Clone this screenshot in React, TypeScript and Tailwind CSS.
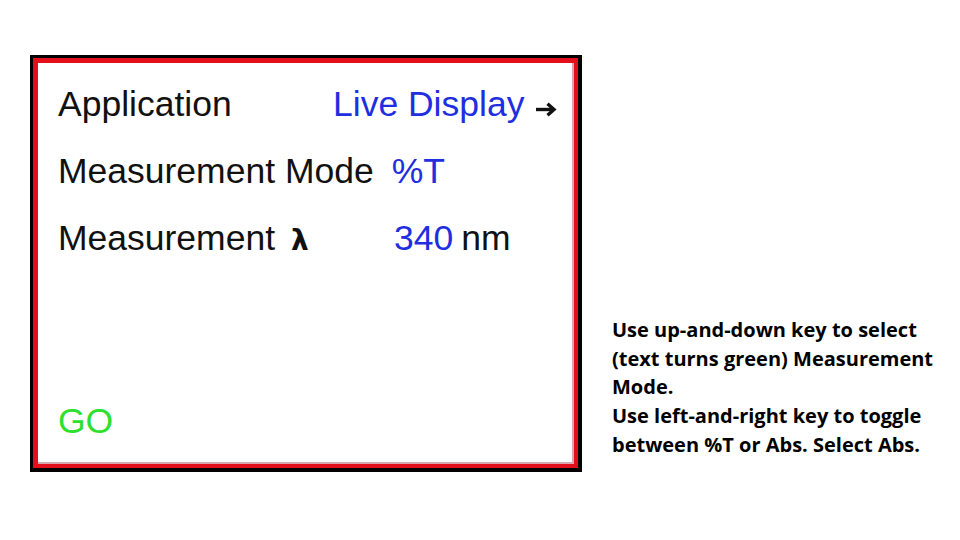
import React from "react";

export default function App() {
  return (
    <div className="w-[960px] h-[540px] bg-white flex items-start overflow-hidden">
      <div className="ml-[30px] mt-[55px] w-[552px] h-[417px] bg-black p-[3px] pr-[4px] pb-[4px] flex">
        <div className="flex-1 bg-[#e3101c] p-[5px] pr-[4px] pb-[4px] flex">
          <div
            className="flex-1 bg-white border-r-2 border-b-2 border-[#d4aab0] flex flex-col pl-[20px] pt-[8px] pb-[7px] text-[35.5px] leading-[67px] text-[#111]"
            style={{ fontFamily: '"Liberation Sans", Arial, sans-serif' }}
          >
            <div className="flex items-center">
              <span className="w-[275px] shrink-0">Application</span>
              <span className="text-[#1e2ee0]">Live Display</span>
              <svg className="ml-[11px] mt-[10px]" width="22" height="15" viewBox="0 0 22 15">
                <path d="M1 7.5 H18" stroke="#111" strokeWidth="3.4" fill="none" />
                <path d="M12.5 1.8 L19 7.5 L12.5 13.2" stroke="#111" strokeWidth="3.4" fill="none" strokeLinejoin="miter" />
              </svg>
            </div>
            <div className="flex items-center">
              <span>Measurement Mode</span>
              <span className="ml-[18px] text-[#1e2ee0]">%T</span>
            </div>
            <div className="flex items-baseline">
              <span className="w-[233px] shrink-0">Measurement</span>
              <span className="text-[28px] font-bold w-[18px] shrink-0" style={{ fontFamily: '"DejaVu Sans", sans-serif' }}>λ</span>
              <span className="ml-[85px] text-[#1e2ee0]">340</span>
              <span className="ml-[8px]">nm</span>
            </div>
            <div className="mt-auto text-[#2ee02e]">GO</div>
          </div>
        </div>
      </div>
      <div
        className="ml-[30px] mt-[316px] text-[20px] leading-[28.7px] font-bold text-black whitespace-nowrap"
        style={{ fontFamily: '"Open Sans", Lato, sans-serif' }}
      >
        <div>Use up-and-down key to select</div>
        <div>(text turns green) Measurement</div>
        <div>Mode.</div>
        <div>Use left-and-right key to toggle</div>
        <div>between %T or Abs. Select Abs.</div>
      </div>
    </div>
  );
}
